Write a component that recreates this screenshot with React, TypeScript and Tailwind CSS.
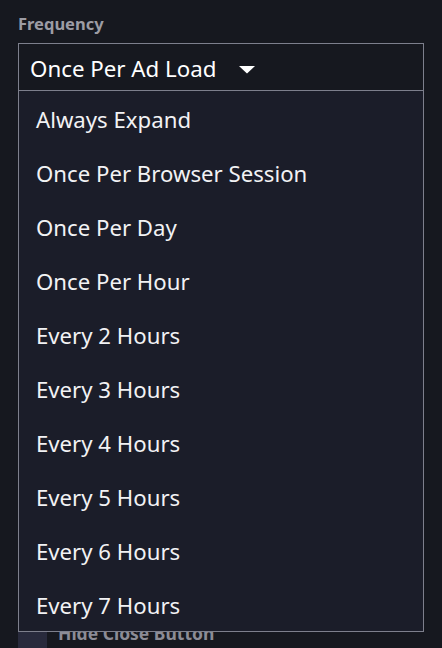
import React from "react";

const items = [
  "Always Expand",
  "Once Per Browser Session",
  "Once Per Day",
  "Once Per Hour",
  "Every 2 Hours",
  "Every 3 Hours",
  "Every 4 Hours",
  "Every 5 Hours",
  "Every 6 Hours",
  "Every 7 Hours",
];

export default function App() {
  return (
    <div
      className="w-[442px] h-[648px] overflow-hidden bg-[#16181f] px-[18px] pt-[13px]"
      style={{ fontFamily: '"Noto Sans", "Open Sans", sans-serif' }}
    >
      <div className="text-[16.5px] font-bold leading-[22px] text-[#9c9ca4]">Frequency</div>
      <div className="relative mt-[8px]">
        <div className="flex h-[48px] items-center border border-[#7d7f8c] bg-[#16181f] pl-[11px] pt-[5px]">
          <span className="text-[22.3px] leading-none text-white">Once Per Ad Load</span>
          <svg width="16" height="8" viewBox="0 0 16 8" className="ml-[22px]">
            <polygon points="0,0 16,0 8,7.5" fill="#ffffff" />
          </svg>
        </div>
        <div className="absolute left-0 right-0 top-[47px] z-10 border border-[#7d7f8c] bg-[#1b1d29]">
          {items.map((t) => (
            <div key={t} className="flex h-[54px] items-center pl-[17px] pt-[4px] text-[22.2px] leading-none text-[#f2f2f4]">
              {t}
            </div>
          ))}
        </div>
        <div className="mt-[530px] flex items-start gap-[11px]">
          <div className="h-[40px] w-[29px] bg-[#282a3c]" />
          <span className="mt-[2px] text-[17.5px] font-bold leading-[20px] text-[#8c8c96]">Hide Close Button</span>
        </div>
      </div>
    </div>
  );
}
